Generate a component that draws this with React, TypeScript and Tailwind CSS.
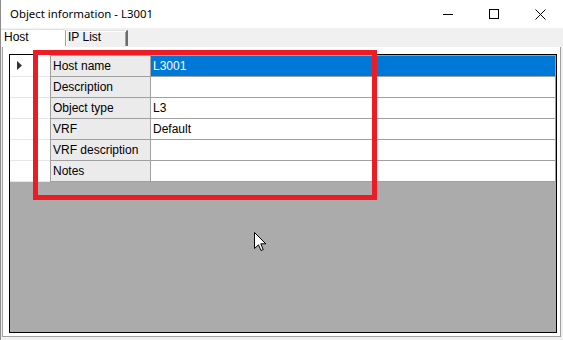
import React from 'react';

type Row = { label: string; value: string; selected?: boolean };

const rows: Row[] = [
  { label: 'Host name', value: 'L3001', selected: true },
  { label: 'Description', value: '' },
  { label: 'Object type', value: 'L3' },
  { label: 'VRF', value: 'Default' },
  { label: 'VRF description', value: '' },
  { label: 'Notes', value: '' },
];

const gridFont = { fontFamily: '"Liberation Sans", Arial, sans-serif' };

const TitleButtons: React.FC = () => (
  <div className="flex h-full">
    <div className="w-[46px] h-full flex items-center justify-center">
      <svg width="10" height="10" viewBox="0 0 10 10">
        <line x1="0" y1="5.5" x2="10" y2="5.5" stroke="#000" strokeWidth="1" />
      </svg>
    </div>
    <div className="w-[46px] h-full flex items-center justify-center">
      <svg width="10" height="10" viewBox="0 0 10 10">
        <rect x="0.5" y="0.5" width="9" height="9" fill="none" stroke="#000" strokeWidth="1" />
      </svg>
    </div>
    <div className="w-[46px] h-full flex items-center justify-center">
      <svg width="11" height="11" viewBox="0 0 11 11">
        <path d="M0.5 0.5 L10.5 10.5 M10.5 0.5 L0.5 10.5" stroke="#000" strokeWidth="1" />
      </svg>
    </div>
  </div>
);

const GridRow: React.FC<{ row: Row; first: boolean }> = ({ row, first }) => (
  <div className="flex h-[21px] shrink-0" style={first ? { height: 22 } : undefined}>
    <div className="w-[40px] bg-white border-b border-[#e6e6e6] flex items-center pl-[7px]">
      {row.selected && (
        <svg width="5" height="9" viewBox="0 0 5 9">
          <path d="M0 0 L5 4.5 L0 9 Z" fill="#333" />
        </svg>
      )}
    </div>
    <div
      className={`w-[100px] bg-[#ebebeb] border-l border-b border-[#a0a0a0] flex items-center pl-[2px] text-[12px] text-black ${
        first ? 'border-t' : ''
      }`}
    >
      {row.label}
    </div>
    <div
      className={`flex-1 border-l border-b border-r border-[#a0a0a0] flex items-center pl-[2px] text-[12px] ${
        first ? 'border-t' : ''
      } ${row.selected ? 'bg-[#0078d7] text-white' : 'bg-white text-black'}`}
    >
      {row.value}
    </div>
  </div>
);

export default function App() {
  return (
    <div className="relative w-[563px] h-[340px] overflow-hidden bg-white border-l border-[#8c8c8c] flex flex-col">
      <div className="h-[28px] shrink-0 flex items-center justify-between bg-white">
        <span
          className="pl-[9px] text-[11.4px] text-black"
          style={{ fontFamily: '"Noto Sans", "Open Sans", sans-serif' }}
        >
          Object information - L3001
        </span>
        <TitleButtons />
      </div>

      <div className="flex-1 flex flex-col bg-[#f0f0f0]" style={gridFont}>
        <div className="h-[19px] shrink-0 flex items-end">
          <div className="w-[64px] h-[18px] bg-white border-t border-[#e3e3e3] pl-[3px] text-[12px] leading-[15px] text-black">
            Host
          </div>
          <div className="w-[63px] h-[16px] mb-[1px] bg-[#f0f0f0] border-l border-t border-r-2 border-l-[#a0a0a0] border-t-[#e3e3e3] border-r-[#6d6d6d] shadow-[inset_1px_1px_0_#fff,inset_-1px_0_0_#a0a0a0] pl-[2px] text-[12px] leading-[13px] text-black">
            IP List
          </div>
        </div>

        <div className="flex-1 flex flex-col bg-white ml-[1px] mr-[2px] mb-[3px] border-l border-r border-b border-[#a0a0a0] pt-[7px] pl-[6px] pr-[3px] pb-[3px]">
          <div className="flex-1 flex flex-col border border-black bg-[#ababab]">
            {rows.map((row, i) => (
              <GridRow key={row.label} row={row} first={i === 0} />
            ))}
          </div>
        </div>
      </div>

      <div className="absolute left-[32px] top-[50px] w-[344px] h-[150px] border-[5px] border-[#ed1c24] pointer-events-none" />

      <svg
        className="absolute left-[253px] top-[232px]"
        width="13"
        height="20"
        viewBox="0 0 13 20"
      >
        <path
          d="M0.5 0.5 L0.5 16.5 L4.5 12.8 L7 18.5 L9.2 17.5 L6.8 11.8 L11.8 11.8 Z"
          fill="#fff"
          stroke="#000"
          strokeWidth="1"
          strokeLinejoin="miter"
        />
      </svg>
    </div>
  );
}
